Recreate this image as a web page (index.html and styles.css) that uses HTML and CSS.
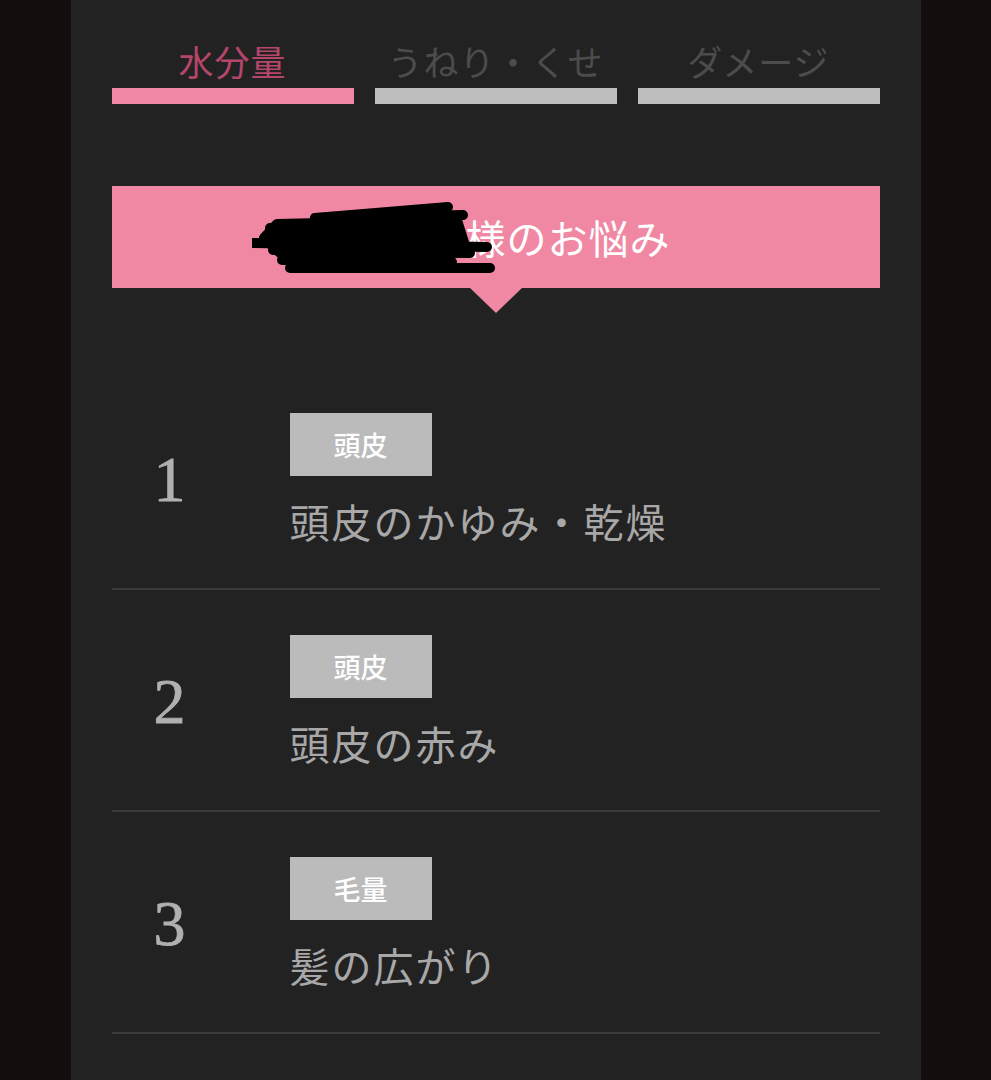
FILE: index.html
```html
<!DOCTYPE html>
<html lang="ja">
<head>
<meta charset="utf-8">
<link rel="stylesheet" href="styles.css">
</head>
<body>
<div class="panel">
  <div class="tabs">
    <div class="tab active"><span class="tab-label">水分量</span><span class="tab-bar"></span></div>
    <div class="tab"><span class="tab-label">うねり・くせ</span><span class="tab-bar"></span></div>
    <div class="tab"><span class="tab-label">ダメージ</span><span class="tab-bar"></span></div>
  </div>

  <div class="banner">
    <span class="name">〇〇〇〇</span><span class="banner-text">様のお悩み</span>
    <svg class="scribble" viewBox="0 0 250 75" width="250" height="75">
      <g stroke="#000" stroke-width="10" stroke-linecap="round" stroke-linejoin="round" fill="#000">
        <path d="M63 16 L196 5"/>
        <path d="M63 16 L211 13"/>
        <path d="M18 26 L205 25"/>
        <path d="M1 41 L235 45"/>
        <path d="M21 48 L218 51"/>
        <path d="M38 66 L238 66"/>
        <path d="M30 58 L200 60"/>
        <path d="M25 22 L205 18 L215 50 L40 62 L12 36 Z"/>
      </g>
    </svg>
  </div>

  <ul class="list">
    <li class="row">
      <div class="num">1</div>
      <div class="body">
        <span class="tag">頭皮</span>
        <p class="title">頭皮のかゆみ・乾燥</p>
      </div>
    </li>
    <li class="row">
      <div class="num">2</div>
      <div class="body">
        <span class="tag">頭皮</span>
        <p class="title">頭皮の赤み</p>
      </div>
    </li>
    <li class="row">
      <div class="num">3</div>
      <div class="body">
        <span class="tag">毛量</span>
        <p class="title">髪の広がり</p>
      </div>
    </li>
  </ul>
</div>
</body>
</html>
```

FILE: styles.css
```css
* { box-sizing: border-box; }
html, body {
  margin: 0;
  padding: 0;
  background: #130d0d;
  height: 1080px;
  overflow: hidden;
}
body {
  font-family: "Noto Sans CJK JP", "Noto Sans", sans-serif;
}
.panel {
  width: 850px;
  margin: 0 auto;
  min-height: 1080px;
  background: #222222;
  padding: 40px 41px 0 41px;
}
.tabs {
  display: flex;
  gap: 21px;
}
.tab {
  flex: 1;
  display: flex;
  flex-direction: column;
  align-items: center;
}
.tab-label {
  font-size: 35px;
  line-height: 42px;
  height: 42px;
  color: #4c4c4c;
  letter-spacing: 1px;
}
.tab-bar {
  display: block;
  width: 100%;
  height: 16px;
  margin-top: 6px;
  background: #bebebe;
}
.tab.active .tab-label { color: #b4466a; }
.tab.active .tab-bar { background: #f088a5; }

.banner {
  position: relative;
  margin-top: 82px;
  height: 102px;
  background: #f088a4;
  display: flex;
  align-items: center;
  padding-left: 142px;
  color: #ffffff;
  font-size: 40px;
}
.banner::after {
  content: "";
  position: absolute;
  left: 50%;
  bottom: -25px;
  margin-left: -26px;
  border-left: 26px solid transparent;
  border-right: 26px solid transparent;
  border-top: 25px solid #f088a4;
}
.name {
  display: inline-block;
  width: 212px;
  padding-left: 24px;
  color: #000;
  white-space: nowrap;
  overflow: hidden;
}
.scribble {
  position: absolute;
  left: 140px;
  top: 16px;
}
.banner-text {
  letter-spacing: 1px;
}

.list {
  list-style: none;
  margin: 80px 0 0 0;
  padding: 0;
}
.row {
  display: flex;
  align-items: center;
  padding: 45px 0 45px 0;
  border-bottom: 2px solid #3b3b3b;
}
.num {
  width: 178px;
  padding-left: 42px;
  padding-top: 4px;
  font-family: "Liberation Serif", "Times New Roman", serif;
  font-size: 64px;
  line-height: 1;
  color: #b0b0b0;
  -webkit-text-stroke: 0.8px #b0b0b0;
}
.body {
  display: flex;
  flex-direction: column;
  align-items: flex-start;
}
.tag {
  display: flex;
  align-items: center;
  justify-content: center;
  width: 142px;
  height: 63px;
  background: #bbbbbb;
  color: #ffffff;
  font-size: 27px;
  font-weight: 500;
}
.title {
  margin: 24px 0 0 0;
  font-size: 40px;
  line-height: 43px;
  color: #a8a8a8;
  letter-spacing: 2px;
}
```
